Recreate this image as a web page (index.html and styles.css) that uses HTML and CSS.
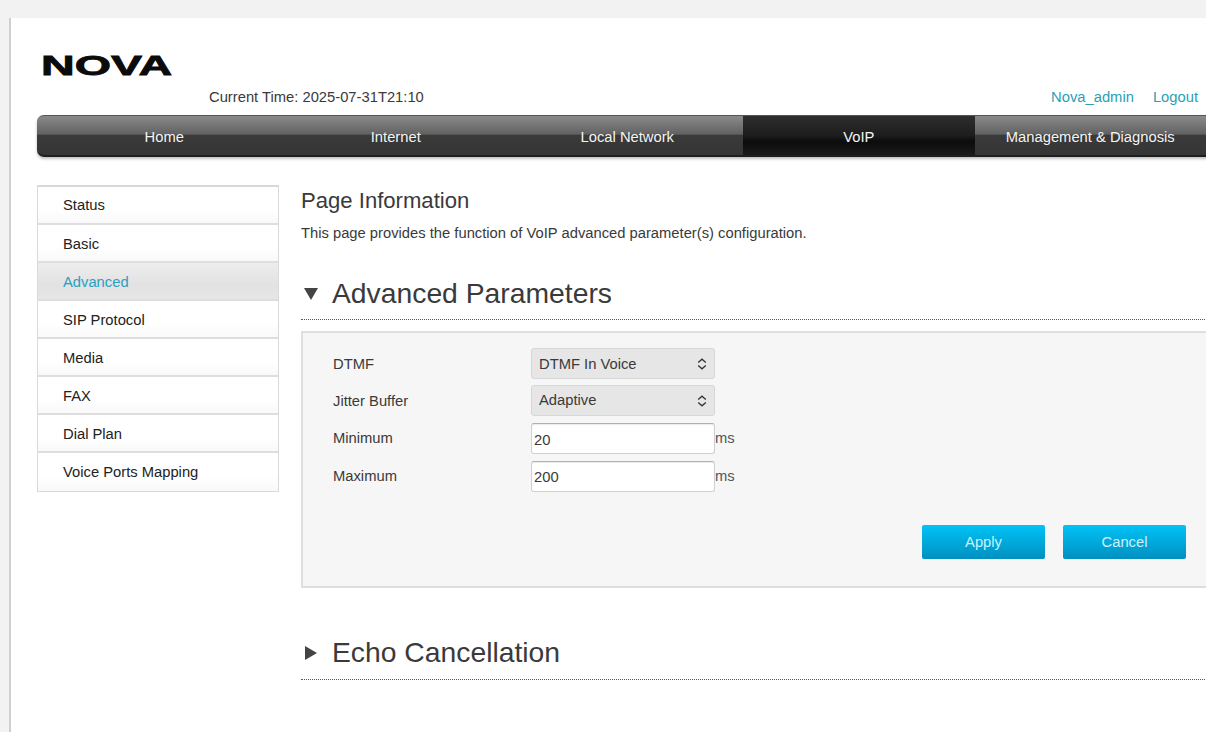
FILE: index.html
```html
<!DOCTYPE html>
<html lang="en">
<head>
<meta charset="utf-8">
<title>NOVA - VoIP Advanced</title>
<link rel="stylesheet" href="styles.css">
</head>
<body>
<div class="page">
  <header class="header">
    <div class="logo-row"><span class="logo">NOVA</span></div>
    <div class="info-row">
      <span class="time">Current Time: 2025-07-31T21:10</span>
      <span class="user-links"><a class="link">Nova_admin</a><a class="link">Logout</a></span>
    </div>
  </header>
  <nav class="nav">
    <a class="tab">Home</a>
    <a class="tab">Internet</a>
    <a class="tab">Local Network</a>
    <a class="tab tab-active">VoIP</a>
    <a class="tab">Management &amp; Diagnosis</a>
  </nav>
  <div class="main">
    <ul class="side">
      <li class="side-item">Status</li>
      <li class="side-item">Basic</li>
      <li class="side-item side-active">Advanced</li>
      <li class="side-item">SIP Protocol</li>
      <li class="side-item">Media</li>
      <li class="side-item">FAX</li>
      <li class="side-item">Dial Plan</li>
      <li class="side-item">Voice Ports Mapping</li>
    </ul>
    <section class="content">
      <h1 class="page-title">Page Information</h1>
      <p class="page-desc">This page provides the function of VoIP advanced parameter(s) configuration.</p>
      <h2 class="section-head section-first">
        <svg class="tri" width="14" height="12" viewBox="0 0 14 12"><path d="M0 0H14L7 12Z"/></svg>
        <span>Advanced Parameters</span>
      </h2>
      <div class="panel">
        <div class="form">
          <label class="lbl lbl-first">DTMF</label>
          <div class="sel-wrap">
            <select class="sel"><option>DTMF In Voice</option></select>
            <svg class="chev" width="10" height="12" viewBox="0 0 10 12"><path d="M1.2 4.6 5 1.2 8.8 4.6M1.2 7.4 5 10.8 8.8 7.4"/></svg>
          </div>
          <label class="lbl">Jitter Buffer</label>
          <div class="sel-wrap sel-second">
            <select class="sel"><option>Adaptive</option></select>
            <svg class="chev" width="10" height="12" viewBox="0 0 10 12"><path d="M1.2 4.6 5 1.2 8.8 4.6M1.2 7.4 5 10.8 8.8 7.4"/></svg>
          </div>
          <label class="lbl">Minimum</label>
          <div class="inp-wrap"><input class="inp" type="text" value="20"><span class="unit">ms</span></div>
          <label class="lbl">Maximum</label>
          <div class="inp-wrap"><input class="inp" type="text" value="200"><span class="unit">ms</span></div>
        </div>
        <div class="actions">
          <button class="btn">Apply</button>
          <button class="btn">Cancel</button>
        </div>
      </div>
      <h2 class="section-head section-second">
        <svg class="tri tri-right" width="12" height="14" viewBox="0 0 12 14"><path d="M0 0V14L12 7Z"/></svg>
        <span>Echo Cancellation</span>
      </h2>
    </section>
  </div>
</div>
</body>
</html>
```
FILE: styles.css
```css
* { box-sizing: border-box; }
html, body { margin: 0; height: 100%; overflow: hidden; }
body {
  background: #f2f2f2;
  font-family: "Liberation Sans", Arial, sans-serif;
  color: #333;
  width: 1206px;
  height: 732px;
}
.page {
  margin: 18px 0 0 9px;
  width: 1197px;
  height: 714px;
  overflow: hidden;
  background: #fff;
  border-left: 2px solid #cfcfcf;
  padding: 0 0 0 26px;
}
.header { width: 1161px; height: 97px; }
.logo-row { height: 67px; padding-top: 35px; padding-left: 4px; }
.logo {
  display: inline-block;
  font-weight: 700;
  font-size: 27.5px;
  line-height: 26px;
  color: #0b0b0b;
  -webkit-text-stroke: 0.8px #0b0b0b;
  transform: scaleX(1.695);
  transform-origin: left center;
}
.info-row {
  display: flex;
  justify-content: space-between;
  padding-left: 172px;
  font-size: 14.75px;
  line-height: 18px;
  height: 30px;
  padding-top: 3px;
}
.time { color: #3a3a3a; }
.user-links { display: flex; gap: 19px; }
.link { color: #2a9fb8; }
.nav {
  display: flex;
  width: 1300px;
  height: 42px;
  padding-left: 11.5px;
  border-radius: 7px 0 0 7px;
  border-top: 1px solid #555;
  border-bottom: 2px solid #1e1e1e;
  background: linear-gradient(#8a8a8a 0, #626262 46%, #3a3a3a 50%, #353535 100%);
  box-shadow: 0 2px 3px rgba(0, 0, 0, .25);
}
.tab {
  flex: 0 0 231.5px;
  display: flex;
  align-items: center;
  justify-content: center;
  padding-top: 2px;
  color: #f4f4f4;
  font-size: 14.75px;
}
.tab-active { background: linear-gradient(#2e2e2e 0, #1d1d1d 50%, #0c0c0c 65%, #1a1a1a 100%); }
.main { display: flex; gap: 22px; padding-top: 28px; }
.side {
  list-style: none;
  margin: 0;
  padding: 0;
  flex: 0 0 242px;
  height: 307px;
  border: 1px solid #d9d9d9;
  border-top-width: 2px;
  border-bottom-width: 1px;
}
.side-item {
  height: 38px;
  padding: 1px 0 0 25px;
  font-size: 14.75px;
  line-height: 36px;
  color: #222;
  border-bottom: 2px solid #dedede;
  background: linear-gradient(#fff 60%, #f9f9f9);
}
.side-item:first-child { padding-top: 0; }
.side-item:last-child { border-bottom: 0; }
.side-active { color: #2a9fc0; background: linear-gradient(#ededed, #e2e2e2 60%, #e6e6e6); }
.content { flex: 0 0 920px; padding-top: 1px; }
.page-title {
  margin: 0;
  font-size: 22.1px;
  font-weight: 400;
  line-height: 30px;
  color: #3a3a3a;
}
.page-desc { margin: 8px 0 0; font-size: 14.75px; line-height: 18px; color: #3a3a3a; }
.section-head {
  display: flex;
  align-items: center;
  margin: 0;
  font-size: 28.3px;
  font-weight: 400;
  color: #3a3a3a;
  border-bottom: 1px dotted #555;
  width: 100%;
}
.section-first { margin-top: 21px; height: 57px; padding-top: 5px; }
.section-first span { margin-left: 14px; }
.section-second { margin-top: 40px; height: 52px; padding-bottom: 2px; }
.section-second span { margin-left: 13px; }
.tri { margin-left: 3px; fill: #444; flex: none; }
.tri-right { margin-left: 4px; margin-right: 2px; }
.panel {
  margin-top: 11px;
  height: 257px;
  background: #f6f6f6;
  border: 2px solid #dedede;
}
.form {
  display: grid;
  grid-template-columns: 198px 184px;
  grid-auto-rows: 31px;
  row-gap: 6.6px;
  padding: 15px 0 0 30px;
}
.lbl { font-size: 14.75px; line-height: 31px; color: #3a3a3a; }
.lbl-first { padding-top: 1px; }
.sel-wrap { position: relative; height: 31px; }
.sel-second { margin-top: -1px; }
.sel {
  appearance: none;
  -webkit-appearance: none;
  display: block;
  width: 184px;
  height: 31px;
  padding: 0 0 0 7px;
  font: 14.75px "Liberation Sans", Arial, sans-serif;
  color: #3a3a3a;
  background: #e6e6e6;
  border: 1px solid #d6d6d6;
  border-radius: 3px;
}
.chev {
  position: absolute;
  right: 8px;
  top: 10px;
  fill: none;
  stroke: #333;
  stroke-width: 1.3;
  pointer-events: none;
}
.inp-wrap { display: flex; align-items: center; width: 230px; }
.inp {
  width: 184px;
  height: 31px;
  padding: 2px 0 0 2px;
  font: 14.75px "Liberation Sans", Arial, sans-serif;
  color: #3a3a3a;
  background: #fff;
  border: 1px solid #d0d0d0;
  border-top-color: #b0b0b0;
  border-radius: 3px;
  box-shadow: inset 0 1px 1px rgba(0, 0, 0, .08);
  flex: none;
}
.unit { margin: 0 0 1px 0; font-size: 14.75px; color: #555; }
.actions {
  display: flex;
  gap: 18px;
  width: 883px;
  justify-content: flex-end;
  margin-top: 33px;
}
.btn {
  width: 123px;
  height: 34px;
  padding: 0;
  border: 0;
  border-radius: 2px;
  background: linear-gradient(#00c3f7, #0090c0);
  color: #c8f3ff;
  font: 14.75px "Liberation Sans", Arial, sans-serif;
}
```
